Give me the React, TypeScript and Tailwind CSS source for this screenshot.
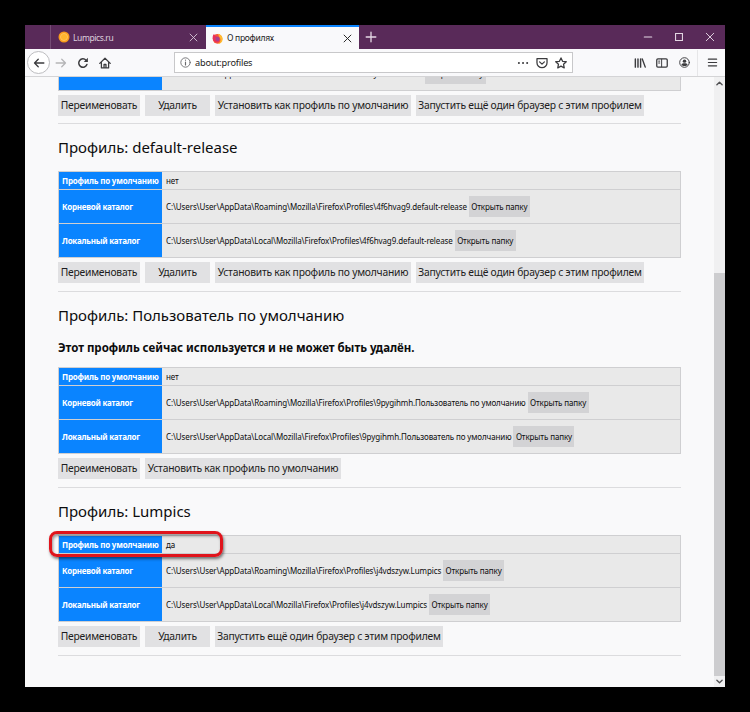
import type { ReactNode } from "react";

type Button = { label: string; className: string };

type Profile = {
    name: string;
    isDefault: string;
    inUse?: boolean;
    root: string;
    local: string;
    buttons: Button[];
};

const RENAME = { label: "Переименовать", className: "w-[82px]" };
const REMOVE = { label: "Удалить", className: "w-[65px]" };
const SET_DEFAULT = { label: "Установить как профиль по умолчанию", className: "w-[196px]" };
const LAUNCH = { label: "Запустить ещё один браузер с этим профилем", className: "w-[228px]" };

const profiles: Profile[] = [
    {
        name: "default-release",
        isDefault: "нет",
        root: "C:\\Users\\User\\AppData\\Roaming\\Mozilla\\Firefox\\Profiles\\4f6hvag9.default-release",
        local: "C:\\Users\\User\\AppData\\Local\\Mozilla\\Firefox\\Profiles\\4f6hvag9.default-release",
        buttons: [RENAME, REMOVE, SET_DEFAULT, LAUNCH],
    },
    {
        name: "Пользователь по умолчанию",
        isDefault: "нет",
        inUse: true,
        root: "C:\\Users\\User\\AppData\\Roaming\\Mozilla\\Firefox\\Profiles\\9pygihmh.Пользователь по умолчанию",
        local: "C:\\Users\\User\\AppData\\Local\\Mozilla\\Firefox\\Profiles\\9pygihmh.Пользователь по умолчанию",
        buttons: [RENAME, SET_DEFAULT],
    },
    {
        name: "Lumpics",
        isDefault: "да",
        root: "C:\\Users\\User\\AppData\\Roaming\\Mozilla\\Firefox\\Profiles\\j4vdszyw.Lumpics",
        local: "C:\\Users\\User\\AppData\\Local\\Mozilla\\Firefox\\Profiles\\j4vdszyw.Lumpics",
        buttons: [RENAME, REMOVE, LAUNCH],
    },
];

const Icon = ({ children, className = "size-3" }: { children: ReactNode; className?: string }) => (
    <svg viewBox="0 0 16 16" fill="none" stroke="currentColor" strokeWidth="1.7" strokeLinecap="round" strokeLinejoin="round" className={`shrink-0 ${className}`}>
        {children}
    </svg>
);

const FirefoxLogo = () => (
    <svg viewBox="0 0 16 16" className="size-[11px] shrink-0">
        <circle cx="8" cy="8.5" r="7" fill="#f5533d" />
        <path d="M9 1c4 1 6.500 4 6.500 8A7.300 7.300 0 0 1 8 16c4-2 5-5 4-8S9 4 9 1z" fill="#ffbd2e" />
        <path d="M1 6c0-2 1-3.500 2-4.500l1.500 2.500L7 5c-1 1-2 1-2 3 0 3 4 4 6 2-1 3-4 4-6 3C2 12 1 9 1 6z" fill="#e8305a" />
        <path d="M5 8c0-2 1-2 2-3l3 1c2 2 1 5-1 6-2 0-4-1-4-4z" fill="#a8408f" />
    </svg>
);

const TitleBar = () => (
    <div className="flex h-6 shrink-0 bg-[#592a59] text-white">
        <div className="w-[26px] border-r border-[#754c75]" />
        <div className="flex w-[155px] items-center pl-[7px] pr-[7px]">
            <svg viewBox="0 0 12 12" className="size-3 shrink-0">
                <circle cx="6" cy="6" r="5.500" fill="#f89b1c" />
                <circle cx="6" cy="6" r="3.600" fill="#ffb52e" stroke="#ffd27a" strokeWidth=".6" />
            </svg>
            <span className="ml-[3px] flex-1 pt-[2px] text-[8.500px] tracking-[-0.4px] text-[#ded0de]">Lumpics.ru</span>
            <Icon className="size-[11px] text-[#d8c8d8]"><path d="M3 3l10 10M13 3L3 13" strokeWidth="1.300" /></Icon>
        </div>
        <div className="flex w-[153px] items-center border-t-2 border-[#0a84ff] bg-[#f9f9fb] pl-[6px] pr-[6px] text-[#222]">
            <FirefoxLogo />
            <span className="ml-[4px] flex-1 text-[8.500px] tracking-[-0.3px]">О профилях</span>
            <Icon className="size-[11px]"><path d="M3 3l10 10M13 3L3 13" strokeWidth="1.400" /></Icon>
        </div>
        <div className="flex flex-1 items-center pl-[5px] text-[#e5d8e5]">
            <Icon className="size-[14px]"><path d="M8 2.500v11M2.500 8h11" strokeWidth="1.500" /></Icon>
        </div>
        <div className="flex items-center gap-[21px] pr-[10px] text-[#e5d8e5]">
            <Icon className="size-[10px]"><path d="M2 8h12" /></Icon>
            <Icon className="size-[10px]"><path d="M2.500 2.500h11v11h-11z" strokeLinejoin="miter" /></Icon>
            <Icon className="size-[10px]"><path d="M2 2l12 12M14 2L2 14" strokeWidth="1.500" /></Icon>
        </div>
    </div>
);

const Toolbar = () => (
    <div className="flex h-7 shrink-0 items-center border-b border-[#d4d4d6] bg-[#f9f9fb] text-[#3b3b3e]">
        <div className="ml-[2px] flex size-[23px] items-center justify-center rounded-full border border-[#bdbdc0] bg-white">
            <Icon><path d="M14.500 8H2M7 3L2 8l5 5" /></Icon>
        </div>
        <Icon className="ml-[5px] size-3 text-[#b5b5b7]"><path d="M1.500 8H14M9 3l5 5-5 5" /></Icon>
        <Icon className="ml-[10px] size-3">
            <path d="M13.200 10A5.600 5.600 0 1 1 12 4.200" strokeWidth="2" />
            <path d="M14.500 1v5.500H9z" fill="currentColor" stroke="none" />
        </Icon>
        <Icon className="ml-[10px] size-3"><path d="M1 8.500L8 1.700l7 6.800M3.200 7.500V14.500h9.600V7.500M6.700 14v-4h2.600v4" /></Icon>
        <div className="ml-[63px] flex h-[21px] w-[399px] items-center border border-[#c8c8ca] bg-white">
            <Icon className="ml-[5px] size-[11px] text-[#6b6b6e]">
                <circle cx="8" cy="8" r="6.800" strokeWidth="1.300" />
                <path d="M8 7.500v4M8 4.500v.2" />
            </Icon>
            <span className="ml-[4px] flex-1 pt-px text-[9.200px] tracking-[-0.2px] text-[#222]">about:profiles</span>
            <Icon><path d="M2.500 8h.1M8 8h.1M13.500 8h.1" strokeWidth="2.600" /></Icon>
            <Icon className="ml-[7px] size-3">
                <path d="M1.300 2.200h13.400v5.300a6.700 6.700 0 0 1-13.400 0z" />
                <path d="M4.800 6.500L8 9.500l3.200-3" />
            </Icon>
            <Icon className="ml-[7px] mr-[5px] size-3">
                <path d="M8 1.200l2.100 4.500 4.900.6-3.600 3.400.9 4.900L8 12.200l-4.300 2.400.9-4.900L1 6.300l4.900-.6z" />
            </Icon>
        </div>
        <Icon className="ml-[61px] size-3"><path d="M1.800 2.500v11M5.300 2.500v11M8.800 2.500v11M11 2.500l4 11" strokeWidth="1.900" /></Icon>
        <Icon className="ml-[10px] size-3">
            <rect x="1" y="2.500" width="14" height="11" rx="1.500" />
            <path d="M7.500 3v10M3.500 5.500h1.500M3.500 8h1.500" strokeWidth="1.300" />
        </Icon>
        <Icon className="ml-[11px] size-[11px]">
            <circle cx="8" cy="8" r="7" strokeWidth="1.400" />
            <circle cx="8" cy="6" r="2.500" fill="currentColor" stroke="none" />
            <path d="M3.500 11c1-2.500 8-2.500 9 0-1.500 3-7.500 3-9 0z" fill="currentColor" stroke="none" />
        </Icon>
        <div className="ml-[7px] h-[26px] w-px bg-[#e6e6e8]" />
        <Icon className="ml-[9px] size-[11px]"><path d="M2 3.200h12M2 8h12M2 12.800h12" /></Icon>
    </div>
);

const Actions = ({ buttons }: { buttons: Button[] }) => (
    <div className="mt-1 flex gap-[5px]">
        {buttons.map(({ label, className }) => (
            <button key={label} className={`h-[21px] shrink-0 whitespace-nowrap bg-[#e1e1e3] text-center text-[10.300px] tracking-[-0.22px] text-[#1c1c20] ${className}`}>
                {label}
            </button>
        ))}
    </div>
);

const PathRow = ({ title, path }: { title?: string; path: string }) => (
    <div className="flex h-[34px] border-b border-[#cfcfd1]">
        <div className="flex w-[103px] shrink-0 items-center bg-[#0a84ff] pl-[3px] text-[8px] font-bold tracking-[-0.23px] text-white">{title}</div>
        <div className="flex flex-1 items-center gap-[2px] whitespace-nowrap pl-1 text-[8px] tracking-[-0.11px]">
            <span>{path}</span>
            <button className="h-[21px] w-[61px] bg-[#d3d3d5] text-center">Открыть папку</button>
        </div>
    </div>
);

const ProfileSection = ({ profile }: { profile: Profile }) => (
    <section className="border-b border-[#dcdcde]">
        <h2 className="flex h-[47px] items-center text-[15px]">Профиль: {profile.name}</h2>
        {profile.inUse && (
            <h3 className="flex h-7 items-start text-[11.500px] font-bold leading-[18px] tracking-[-0.03px]">Этот профиль сейчас используется и не может быть удалён.</h3>
        )}
        <div className="relative border-x border-t border-[#cfcfd1] bg-[#e9e9e9]">
            <div className="flex h-[18px] border-b border-[#cfcfd1] text-[8px]">
                <div className="flex w-[103px] shrink-0 items-center whitespace-nowrap bg-[#0a84ff] pl-[3px] font-bold tracking-[-0.2px] text-white">Профиль по умолчанию</div>
                <div className="flex items-center pl-1 tracking-[-0.11px]">{profile.isDefault}</div>
            </div>
            <PathRow title="Корневой каталог" path={profile.root} />
            <PathRow title="Локальный каталог" path={profile.local} />
            {/* рамка вокруг профиля по умолчанию */}
            {profile.isDefault === "да" && (
                <div className="absolute -left-[10px] -top-[5px] h-[26px] w-[174px] rounded-[8px] border-[3px] border-[#e0141c] shadow-[1px_2px_3px_rgba(0,0,0,0.5),inset_1px_2px_3px_rgba(0,0,0,0.4)]" />
            )}
        </div>
        <Actions buttons={profile.buttons} />
        <div className="h-2" />
    </section>
);

const App = () => {
    return (
        <div className="h-[712px] w-[750px] bg-black p-[25px] font-['Noto_Sans','Open_Sans',sans-serif] text-[#0c0c0d]">
            <div className="flex h-[662px] w-[700px] flex-col overflow-hidden bg-[#f9f9fa]">
                <TitleBar />
                <Toolbar />
                <div className="flex min-h-0 flex-1">
                    <main className="min-w-0 flex-1 overflow-hidden px-[33px]">
                        {/* верхняя таблица частично прокручена */}
                        <div className="-mt-5 border-b border-[#dcdcde]">
                            <div className="border-x border-[#cfcfd1] bg-[#e9e9e9]">
                                <PathRow path={"C:\\Users\\User\\AppData\\Local\\Mozilla\\Firefox\\Profiles\\fk3yb0z1.default"} />
                            </div>
                            <Actions buttons={[RENAME, REMOVE, SET_DEFAULT, LAUNCH]} />
                            <div className="h-[7px]" />
                        </div>
                        {profiles.map((profile) => (
                            <ProfileSection key={profile.name} profile={profile} />
                        ))}
                    </main>
                    <div className="flex w-[11px] shrink-0 flex-col items-center bg-[#f0f0f1] text-[#505052]">
                        <Icon className="mt-[3px] size-[7px]"><path d="M2 11l6-6 6 6" strokeWidth="3" /></Icon>
                        <div className="mt-[186px] w-full flex-1 bg-[#cdcdcf]" />
                        <Icon className="my-[2px] size-[7px]"><path d="M2 5l6 6 6-6" strokeWidth="3" /></Icon>
                    </div>
                </div>
            </div>
        </div>
    );
};

export default App;
